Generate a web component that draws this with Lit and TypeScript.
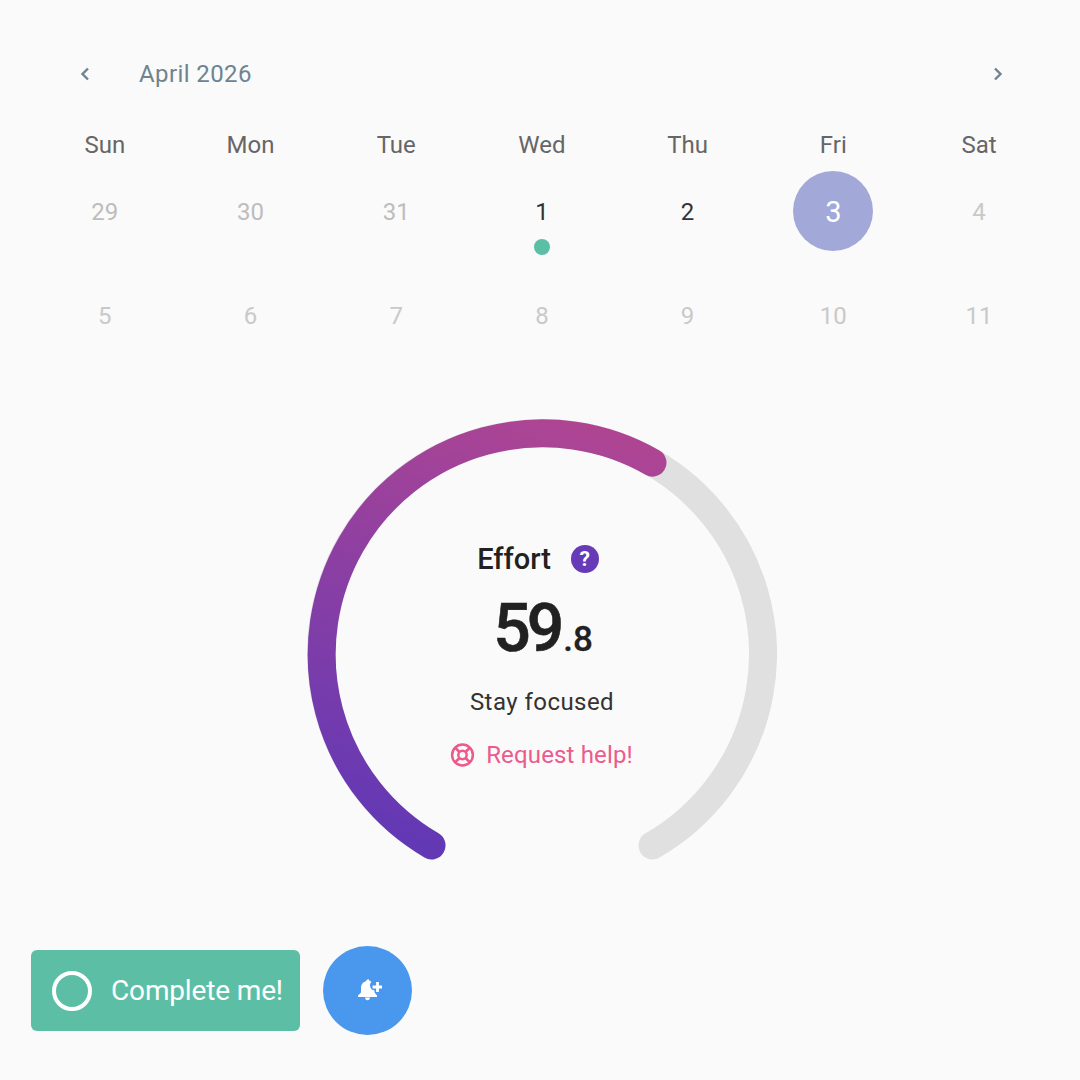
import { LitElement, html, css, svg } from "lit";
import { customElement } from "lit/decorators.js";

const ROWS = [
  [["29","m"],["30","m"],["31","m"],["1","d"],["2","d"],["3","s"],["4","f"]],
  [["5","f"],["6","f"],["7","f"],["8","f"],["9","f"],["10","f"],["11","f"]],
];
const DAYS = ["Sun","Mon","Tue","Wed","Thu","Fri","Sat"];

const CX = 235, CY = 235, R = 221;
function pt(deg: number) {
  const a = (deg * Math.PI) / 180;
  return [CX + R * Math.sin(a), CY - R * Math.cos(a)];
}
function arc(from: number, to: number) {
  const [x1, y1] = pt(from);
  const [x2, y2] = pt(to);
  const large = to - from > 180 ? 1 : 0;
  return `M${x1.toFixed(2)} ${y1.toFixed(2)}A${R} ${R} 0 ${large} 1 ${x2.toFixed(2)} ${y2.toFixed(2)}`;
}

@customElement("app-root")
export class AppRoot extends LitElement {
  static styles = css`
    :host { display: block; width: 1080px; height: 1080px; background: #fafafa; font-family: Roboto, sans-serif; overflow: hidden; }
    .page { display: flex; flex-direction: column; height: 1080px; box-sizing: border-box; padding: 50px 28px 0 32px; }
    .head { display: flex; align-items: center; height: 48px; color: #6f8390; }
    .nav { width: 24px; height: 24px; display: block; flex: none; }
    .nav.prev { margin-left: 41px; }
    .nav.next { margin-left: auto; margin-right: 42px; }
    .month { font-size: 24px; margin-left: 42px; letter-spacing: 0.4px; }
    .grid { display: grid; grid-template-columns: repeat(7, 145.7px); margin-top: 27px; }
    .dow { height: 40px; margin-bottom: 6px; display: flex; align-items: center; justify-content: center; font-size: 24px; color: #666; }
    .cell { height: 104px; display: flex; justify-content: center; position: relative; }
    .num { width: 80px; height: 80px; border-radius: 50%; display: flex; align-items: center; justify-content: center; font-size: 24px; padding-top: 1px; box-sizing: border-box; }
    .m { color: #bdbdbd; }
    .f { color: #c9c9c9; }
    .d { color: #333; }
    .s .num { background: #a2a9d8; color: #fff; font-size: 29px; }
    .dot { position: absolute; left: 50%; top: 68px; width: 16px; height: 16px; margin-left: -8px; border-radius: 50%; background: #5bbfa5; }
    .gauge { display: grid; width: 470px; height: 470px; margin: 40px 0 0 275px; }
    .gauge > * { grid-area: 1 / 1; }
    .gauge svg.ring { display: block; }
    .center { display: flex; flex-direction: column; align-items: center; padding-top: 120px; color: #212121; }
    .title { display: flex; align-items: center; height: 40px; font-size: 29px; font-weight: 500; transform: translateX(-4px); }
    .q { width: 28px; height: 28px; border-radius: 50%; background: #673ab7; color: #fff; font-size: 21px; font-weight: 700; display: flex; align-items: center; justify-content: center; margin-left: 20px; }
    .value { font-size: 66px; font-weight: 500; line-height: 84px; height: 84px; margin-top: 8px; letter-spacing: -4px; -webkit-text-stroke: 0.6px #212121; transform: translateX(1px); }
    .value small { font-size: 35px; font-weight: 500; letter-spacing: 0; margin-left: 3px; -webkit-text-stroke: 0.3px #212121; }
    .status { font-size: 24px; margin-top: 14px; height: 34px; line-height: 34px; letter-spacing: 0.45px; color: #333; }
    .help { display: flex; align-items: center; margin-top: 19px; height: 34px; color: #ec5b8c; font-size: 24px; letter-spacing: 0.15px; }
    .help span { position: relative; top: 0; }
    .help svg { width: 26px; height: 26px; margin-right: 11px; margin-left: -2px; }
    .actions { display: flex; align-items: center; margin: 57px 0 0 -1px; gap: 23px; }
    .complete { width: 269px; height: 81px; box-sizing: border-box; border-radius: 6px; background: #5cbfa5; color: #fff; display: flex; align-items: center; padding-left: 21px; font-size: 28px; letter-spacing: -0.15px; white-space: nowrap; }
    .complete i { width: 40px; height: 40px; box-sizing: border-box; border: 4px solid #fff; border-radius: 50%; margin-right: 19px; flex: none; }
    .fab { width: 89px; height: 89px; border-radius: 50%; background: #4a97ee; display: flex; align-items: center; justify-content: center; }
    .fab svg { width: 26px; height: 26px; display: block; margin: 1px 0 0 3px; }
  `;

  render() {
    return html`<div class="page">
      <div class="head">
        <svg class="nav prev" viewBox="0 0 24 24"><path d="M15 6.5 L9.5 12 L15 17.5" fill="none" stroke="currentColor" stroke-width="2.4"/></svg>
        <span class="month">April 2026</span>
        <svg class="nav next" viewBox="0 0 24 24"><path d="M9 6.5 L14.5 12 L9 17.5" fill="none" stroke="currentColor" stroke-width="2.4"/></svg>
      </div>
      <div class="grid">
        ${DAYS.map((d) => html`<div class="dow">${d}</div>`)}
        ${ROWS.flat().map(([n, k]) => html`<div class="cell ${k}">
          <div class="num">${n}</div>
          ${n === "1" ? html`<div class="dot"></div>` : ""}
        </div>`)}
      </div>
      <div class="gauge">
        <svg class="ring" width="470" height="470" viewBox="0 0 470 470">
          <defs>
            <linearGradient id="g" gradientUnits="userSpaceOnUse" x1="140" y1="440" x2="280" y2="10">
              <stop offset="0" stop-color="#6238b5"/>
              <stop offset="1" stop-color="#ae4593"/>
            </linearGradient>
          </defs>
          ${svg`<path d=${arc(-150, 150)} fill="none" stroke="#e0e0e0" stroke-width="28" stroke-linecap="round"/>
          <path d=${arc(-150, 30)} fill="none" stroke="url(#g)" stroke-width="28" stroke-linecap="round"/>`}
        </svg>
        <div class="center">
          <div class="title">Effort<span class="q">?</span></div>
          <div class="value">59<small>.8</small></div>
          <div class="status">Stay focused</div>
          <div class="help">
            <svg viewBox="0 0 26 26" fill="none" stroke="#ec5b8c" stroke-width="2.5">
              <circle cx="13.5" cy="13" r="10.4"/>
              <circle cx="13.5" cy="13" r="4.2"/>
              <path d="M6 5.5 10.5 10M21 5.5 16.5 10M6 20.5 10.5 16M21 20.5 16.5 16"/>
            </svg>
            <span>Request help!</span>
          </div>
        </div>
      </div>
      <div class="actions">
        <div class="complete"><i></i>Complete me!</div>
        <div class="fab">
          <svg viewBox="0 0 26 26" fill="#fff">
            <path d="M11.5 1c1 0 1.6.7 1.7 1.6.9.2 1.6.6 2.2 1.1-.9 1-1.4 2.2-1.4 3.5 0 2.9 2 5 4.5 5.4v2l2.5 3v1.4H2v-1.4l3-3v-5c0-3 1.7-5.2 4.6-6 .1-.9.9-1.6 1.9-1.6z"/>
            <path d="M9 19.5h5c0 1.5-1.1 2.8-2.5 2.8S9 21 9 19.5z"/>
            <path d="M20.1 4h2.8v3.6h3.1v2.8h-3.1V14h-2.8v-3.6H16.6V7.6h3.5z"/>
          </svg>
        </div>
      </div>
    </div>`;
  }
}
